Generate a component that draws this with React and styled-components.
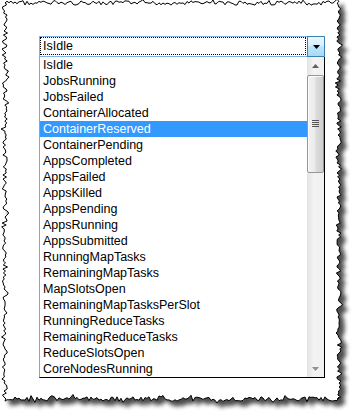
import styled, { createGlobalStyle } from "styled-components";

const GlobalStyle = createGlobalStyle`
  html, body {
    margin: 0;
    background: #fff;
  }
  body {
    width: 359px;
    height: 417px;
    overflow: hidden;
    font-family: "Liberation Sans", Arial, sans-serif;
  }
`;

const items = [
  "IsIdle",
  "JobsRunning",
  "JobsFailed",
  "ContainerAllocated",
  "ContainerReserved",
  "ContainerPending",
  "AppsCompleted",
  "AppsFailed",
  "AppsKilled",
  "AppsPending",
  "AppsRunning",
  "AppsSubmitted",
  "RunningMapTasks",
  "RemainingMapTasks",
  "MapSlotsOpen",
  "RemainingMapTasksPerSlot",
  "RunningReduceTasks",
  "RemainingReduceTasks",
  "ReduceSlotsOpen",
  "CoreNodesRunning",
];

const Page = styled.div`
  padding: 3px 0 0 5px;
`;

const Paper = styled.div`
  position: relative;
  width: 334px;
  height: 396px;
  box-sizing: border-box;
  padding: 33px 0 0 34px;
`;

const Edge = styled.svg`
  position: absolute;
  left: 0;
  top: 0;
  overflow: visible;
  z-index: 0;
`;

const Content = styled.div`
  position: relative;
  z-index: 1;
  width: 286px;
`;

const Combo = styled.div`
  display: flex;
  height: 21px;
  box-sizing: border-box;
  border: 1px solid #7eb4ea;
  border-right-color: #3c7fb1;
  background: #fff;
`;

const Field = styled.div`
  flex: 1;
  margin: 0 1px 1px 0;
  border: 1px dotted #000;
  font-size: 12.5px;
  line-height: 16px;
  padding-left: 2px;
  color: #000;
`;

const DropButton = styled.div`
  width: 16px;
  margin-top: -1px;
  margin-bottom: -1px;
  border-left: 1px solid #3c7fb1;
  border-top: 1px solid #3c7fb1;
  border-bottom: 1px solid #3c7fb1;
  background: linear-gradient(to bottom, #eaf6fd 0%, #d9f0fc 45%, #bee6fd 50%, #a7d9f5 100%);
  display: flex;
  align-items: center;
  justify-content: center;
`;

const List = styled.div`
  display: flex;
  height: 321px;
  box-sizing: border-box;
  border-left: 1px solid #a0a0a0;
  border-right: 1px solid #000;
  border-bottom: 1px solid #000;
  background: #fff;
`;

const Options = styled.div`
  flex: 1;
  overflow: hidden;
`;

const Option = styled.div`
  height: 16px;
  line-height: 16px;
  padding-left: 3px;
  font-size: 12.5px;
  white-space: nowrap;
  color: ${(p) => (p.$selected ? "#fff" : "#000")};
  background: ${(p) => (p.$selected ? "#3399ff" : "transparent")};
`;

const Scrollbar = styled.div`
  width: 17px;
  display: flex;
  flex-direction: column;
  background: linear-gradient(to right, #e3e3e3, #f3f3f3 40%, #f0f0f0);
`;

const Arrow = styled.div`
  height: 17px;
  display: flex;
  align-items: center;
  justify-content: center;
`;

const Track = styled.div`
  flex: 1;
  padding-top: 1px;
`;

const Thumb = styled.div`
  height: 98px;
  box-sizing: border-box;
  border: 1px solid #979797;
  border-radius: 2px;
  background: linear-gradient(to right, #f2f2f2, #ebebeb 45%, #dbdbdb 55%, #cfcfcf);
  box-shadow: inset 1px 1px 0 #fbfbfb;
  display: flex;
  align-items: center;
  justify-content: center;
`;

function rng(seed) {
  let s = seed;
  return () => {
    s = (s * 9301 + 49297) % 233280;
    return s / 233280;
  };
}

function tornPath(w, h) {
  const r = rng(7);
  const pts = [];
  const j = () => (r() - 0.5) * 4.5 + (r() < 0.2 ? (r() - 0.5) * 5 : 0);
  for (let x = 0; x <= w; x += 2) pts.push([x, j()]);
  for (let y = 0; y <= h; y += 2) pts.push([w + j(), y]);
  for (let x = w; x >= 0; x -= 2) pts.push([x, h + j()]);
  for (let y = h; y >= 0; y -= 2) pts.push([j(), y]);
  return "M" + pts.map((p) => p[0].toFixed(1) + " " + p[1].toFixed(1)).join(" L") + " Z";
}

const W = 334;
const H = 396;
const edgePath = tornPath(W, H);

function TornEdge() {
  return (
    <Edge width={W} height={H}>
      <defs>
        <filter id="sh" x="-5%" y="-5%" width="115%" height="115%">
          <feGaussianBlur in="SourceAlpha" stdDeviation="2" />
          <feOffset dx="5" dy="5" result="b" />
          <feComponentTransfer>
            <feFuncA type="linear" slope="0.7" />
          </feComponentTransfer>
          <feMerge>
            <feMergeNode />
            <feMergeNode in="SourceGraphic" />
          </feMerge>
        </filter>
      </defs>
      <path d={edgePath} fill="#fff" stroke="#000" strokeWidth="1" filter="url(#sh)" />
    </Edge>
  );
}

export default function App() {
  return (
    <>
      <GlobalStyle />
      <Page>
        <Paper>
          <TornEdge />
          <Content>
            <Combo>
              <Field>IsIdle</Field>
              <DropButton>
                <svg width="7" height="4" viewBox="0 0 7 4">
                  <path d="M0 0 L7 0 L3.5 4 Z" fill="#000" />
                </svg>
              </DropButton>
            </Combo>
            <List>
              <Options>
                {items.map((it, i) => (
                  <Option key={it} $selected={i === 4}>
                    {it}
                  </Option>
                ))}
              </Options>
              <Scrollbar>
                <Arrow>
                  <svg width="7" height="4" viewBox="0 0 7 4">
                    <path d="M3.5 0 L7 4 L0 4 Z" fill="#606060" />
                  </svg>
                </Arrow>
                <Track>
                  <Thumb>
                    <svg width="7" height="8" viewBox="0 0 7 8">
                      <path d="M0 0.5 H7 M0 2.5 H7 M0 4.5 H7 M0 6.5 H7" stroke="#555" strokeWidth="1" />
                    </svg>
                  </Thumb>
                </Track>
                <Arrow>
                  <svg width="7" height="4" viewBox="0 0 7 4">
                    <path d="M0 0 L7 0 L3.5 4 Z" fill="#909090" />
                  </svg>
                </Arrow>
              </Scrollbar>
            </List>
          </Content>
        </Paper>
      </Page>
    </>
  );
}
